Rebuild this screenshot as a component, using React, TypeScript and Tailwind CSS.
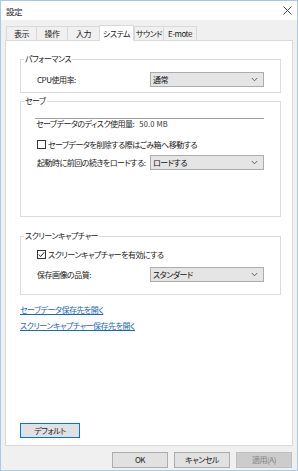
import React from "react";

const Chevron = () => (
  <svg width="7" height="5" viewBox="0 0 7 5" className="shrink-0">
    <path d="M0.8 1 L3.5 3.8 L6.2 1" fill="none" stroke="#555" strokeWidth="0.9" />
  </svg>
);

const Select = ({ value }: { value: string }) => (
  <div className="w-[114px] h-[15px] bg-[#e5e5e5] border border-[#acacac] flex items-center justify-between pl-[2px] pr-[5px] text-[#111] shrink-0">
    <span className="leading-[13px]">{value}</span>
    <Chevron />
  </div>
);

const Check = ({ checked }: { checked?: boolean }) => (
  <div className="w-[9px] h-[9px] border border-[#333] bg-white shrink-0 flex items-center justify-center">
    {checked && (
      <svg width="7" height="7" viewBox="0 0 7 7">
        <path d="M0.8 3.6 L2.7 5.5 L6.3 1.2" fill="none" stroke="#222" strokeWidth="1" />
      </svg>
    )}
  </div>
);

const tabs = [
  { t: "表示", w: "w-[30px]" },
  { t: "操作", w: "w-[31px]" },
  { t: "入力", w: "w-[32px]" },
  { t: "システム", w: "w-[35px]", sel: true },
  { t: "サウンド", w: "w-[29px]" },
  { t: "E-mote", w: "w-[34px]" },
];

export default function App() {
  return (
    <div className="w-[298px] h-[471px] border border-[#a8c9ea] bg-[#f0f0f0] flex flex-col text-[8px] tracking-[-0.5px] text-[#1a1a1a] font-[family-name:'Noto_Sans_CJK_JP',sans-serif] [font-feature-settings:'palt'] overflow-hidden">
      {/* title bar */}
      <div className="h-[19px] bg-white flex items-center justify-between pl-[5px] pr-[5px] shrink-0">
        <span className="leading-[12px] text-[8.5px]">設定</span>
        <svg width="9" height="9" viewBox="0 0 9 9">
          <path d="M0.5 0.5 L8.5 8.5 M8.5 0.5 L0.5 8.5" stroke="#333" strokeWidth="0.9" />
        </svg>
      </div>

      {/* tabs */}
      <div className="mt-[5px] h-[16px] flex items-end ml-[5px] mb-[-1px] shrink-0">
        {tabs.map((tab, i) =>
          tab.sel ? (
            <div
              key={tab.t}
              className={`${tab.w} h-[16px] relative z-10 bg-white border border-b-0 border-[#d9d9d9] flex items-center justify-center leading-[12px] whitespace-nowrap`}
            >
              {tab.t}
            </div>
          ) : (
            <div
              key={tab.t}
              className={`${tab.w} h-[15px] bg-[#f0f0f0] border-t border-l border-[#d9d9d9] ${i === tabs.length - 1 ? "border-r" : ""} flex items-center justify-center leading-[12px] whitespace-nowrap`}
            >
              {tab.t}
            </div>
          )
        )}
      </div>

      {/* panel */}
      <div className="ml-[4px] w-[288px] h-[406px] border border-[#d9d9d9] bg-white flex flex-col shrink-0">
        {/* performance */}
        <fieldset className="mt-[12px] ml-[14px] w-[261px] border border-[#dcdcdc] pb-[5px]">
          <legend className="ml-[3px] px-[1px] leading-[12px]">パフォーマンス</legend>
          <div className="mt-[7px] h-[15px] flex items-center pl-[16px]">
            <span className="w-[113px]">CPU使用率:</span>
            <Select value="通常" />
          </div>
        </fieldset>

        {/* save */}
        <fieldset className="mt-[2px] ml-[14px] w-[261px] border border-[#dcdcdc] pb-[46px]">
          <legend className="ml-[3px] px-[1px] leading-[12px]">セーブ</legend>
          <div className="mt-[11px] ml-[14px] w-[229px] border-t border-[#a0a0a0] h-[10px] flex items-center pl-[1px]">
            <span className="leading-[9px]">セーブデータのディスク使用量:</span>
            <span className="ml-[5px] text-[7.5px] tracking-[0.2px] leading-[9px] text-[#333]">50.0 MB</span>
          </div>
          <div className="mt-[11px] h-[11px] flex items-center pl-[16px] gap-[2px]">
            <Check />
            <span className="leading-[11px]">セーブデータを削除する際はごみ箱へ移動する</span>
          </div>
          <div className="mt-[5px] h-[15px] flex items-center pl-[16px]">
            <span className="w-[113px] whitespace-nowrap">起動時に前回の続きをロードする:</span>
            <Select value="ロードする" />
          </div>
        </fieldset>

        {/* capture */}
        <fieldset className="mt-[13px] ml-[14px] w-[261px] border border-[#dcdcdc] pb-[12px]">
          <legend className="ml-[3px] px-[1px] leading-[12px]">スクリーンキャプチャー</legend>
          <div className="mt-[7px] h-[11px] flex items-center pl-[16px] gap-[2px]">
            <Check checked />
            <span className="leading-[11px]">スクリーンキャプチャーを有効にする</span>
          </div>
          <div className="mt-[7px] h-[15px] flex items-center pl-[16px]">
            <span className="w-[113px]">保存画像の品質:</span>
            <Select value="スタンダード" />
          </div>
        </fieldset>

        <div className="mt-[9px] ml-[14px] h-[12px] leading-[12px]">
          <span className="text-[#1a66cc] underline">セーブデータ保存先を開く</span>
        </div>
        <div className="mt-[4px] ml-[14px] h-[12px] leading-[12px]">
          <span className="text-[#1a66cc] underline">スクリーンキャプチャー保存先を開く</span>
        </div>

        <div className="mt-auto mb-[7px] ml-[14px] w-[60px] h-[15px] bg-[#e1e1e1] border border-[#0078d7] flex items-center justify-center leading-[12px]">
          デフォルト
        </div>
      </div>

      {/* bottom buttons */}
      <div className="mt-[6px] ml-[111px] flex gap-[6px] shrink-0">
        <div className="w-[56px] h-[16px] bg-[#e1e1e1] border border-[#adadad] flex items-center justify-center leading-[12px]">OK</div>
        <div className="w-[56px] h-[16px] bg-[#e1e1e1] border border-[#adadad] flex items-center justify-center leading-[12px]">キャンセル</div>
        <div className="w-[56px] h-[16px] bg-[#cccccc] border border-[#bfbfbf] text-[#838383] flex items-center justify-center leading-[12px]">適用(A)</div>
      </div>
    </div>
  );
}
